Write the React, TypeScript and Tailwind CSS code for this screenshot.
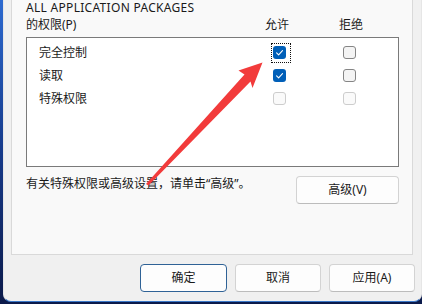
import React from "react";

const FONT = { fontFamily: '"Noto Sans", "Noto Sans CJK SC", sans-serif' };

function Box({ state, focus }: { state: "checked" | "unchecked" | "disabled"; focus?: boolean }) {
  return (
    <div className="relative w-[13px] h-[13px] shrink-0">
      {state === "checked" && (
        <div className="w-[13px] h-[13px] rounded-[3px] bg-[#005fb8] flex items-center justify-center">
          <svg width="13" height="13" viewBox="0 0 13 13">
            <path d="M3.6 6.9 L5.6 8.8 L9.5 4.7" fill="none" stroke="#ffffff" strokeWidth="1.1" strokeLinecap="round" strokeLinejoin="round" />
          </svg>
        </div>
      )}
      {state === "unchecked" && (
        <div className="w-[13px] h-[13px] rounded-[3px] border border-[#858585] bg-[#f4f4f4]" />
      )}
      {state === "disabled" && (
        <div className="w-[13px] h-[13px] rounded-[3px] border border-[#cdcdcd] bg-[#fafafa]" />
      )}
      {focus && (
        <span className="absolute left-[-2px] top-[-3px] w-[20px] h-[20px] border border-dotted border-[#111]" />
      )}
    </div>
  );
}

function Row({ label, allow, deny, focus }: { label: string; allow: "checked" | "unchecked" | "disabled"; deny: "checked" | "unchecked" | "disabled"; focus?: boolean }) {
  return (
    <div className="h-[23px] flex items-center pl-[12px]">
      <span className="w-[234px] text-[12px] leading-[16px] text-[#1a1a1a]">{label}</span>
      <Box state={allow} focus={focus} />
      <div className="ml-[57px]">
        <Box state={deny} />
      </div>
    </div>
  );
}

export default function App() {
  return (
    <div className="relative w-[422px] h-[304px] overflow-hidden bg-gradient-to-b from-[#2d6ad0] via-[#163a8a] to-[#0b1a4a]" style={FONT}>
      <div className="flex pl-[3px]">
        <div className="w-[419px] h-[302px] bg-[#f0f0f0] border-l border-r border-b border-l-[#e6e6e6] border-r-[#e6e6e6] border-b-[#3a78c8] rounded-bl-[8px] rounded-br-[8px] flex flex-col pl-[7px]">
          <div className="w-[402px] h-[255px] bg-[#f9f9f9] border-l border-r border-b border-[#d9d9d9] pl-[14px] pr-[13px] flex flex-col">
            <div className="h-[16px] text-[12px] leading-[16px] tracking-[0.3px] text-[#1a1a1a] whitespace-nowrap">ALL APPLICATION PACKAGES</div>
            <div className="mt-[1px] h-[16px] flex text-[12px] leading-[16px] text-[#1a1a1a] whitespace-nowrap">
              <span className="w-[239px]">的权限(P)</span>
              <span className="w-[24px]">允许</span>
              <span className="ml-[50px]">拒绝</span>
            </div>
            <div className="mt-[4px] w-[373px] h-[130px] bg-white border border-[#7a7a7a] pt-[3px]">
              <Row label="完全控制" allow="checked" deny="unchecked" focus />
              <Row label="读取" allow="checked" deny="unchecked" />
              <Row label="特殊权限" allow="disabled" deny="disabled" />
            </div>
            <div className="mt-[9px] flex items-start">
              <span className="text-[12px] leading-[16px] text-[#1a1a1a] whitespace-nowrap">有关特殊权限或高级设置，请单击“高级”。</span>
              <button className="ml-auto w-[103px] h-[28px] rounded-[4px] bg-[#fdfdfd] border border-[#d3d3d3] border-b-[#bcbcbc] text-[12px] text-[#1a1a1a]">
                高级(V)
              </button>
            </div>
          </div>
          <div className="mt-[9px] flex pl-[129px] gap-[8px]">
            <button className="w-[87px] h-[28px] rounded-[4px] bg-[#fdfdfd] border border-[#2f6296] text-[12px] text-[#1a1a1a]">确定</button>
            <button className="w-[86px] h-[28px] rounded-[4px] bg-[#fdfdfd] border border-[#d3d3d3] border-b-[#bcbcbc] text-[12px] text-[#1a1a1a]">取消</button>
            <button className="w-[86px] h-[28px] rounded-[4px] bg-[#fdfdfd] border border-[#d3d3d3] border-b-[#bcbcbc] text-[12px] text-[#1a1a1a]">应用(A)</button>
          </div>
        </div>
      </div>
      <svg className="absolute left-0 top-0 pointer-events-none" width="422" height="304" viewBox="0 0 422 304">
        <polygon
          points="146,184 244.5,74.5 238.5,70.5 262.5,62.5 252.5,88 250.5,81.5 148.5,185.5"
          fill="#f23b3b"
        />
      </svg>
    </div>
  );
}
